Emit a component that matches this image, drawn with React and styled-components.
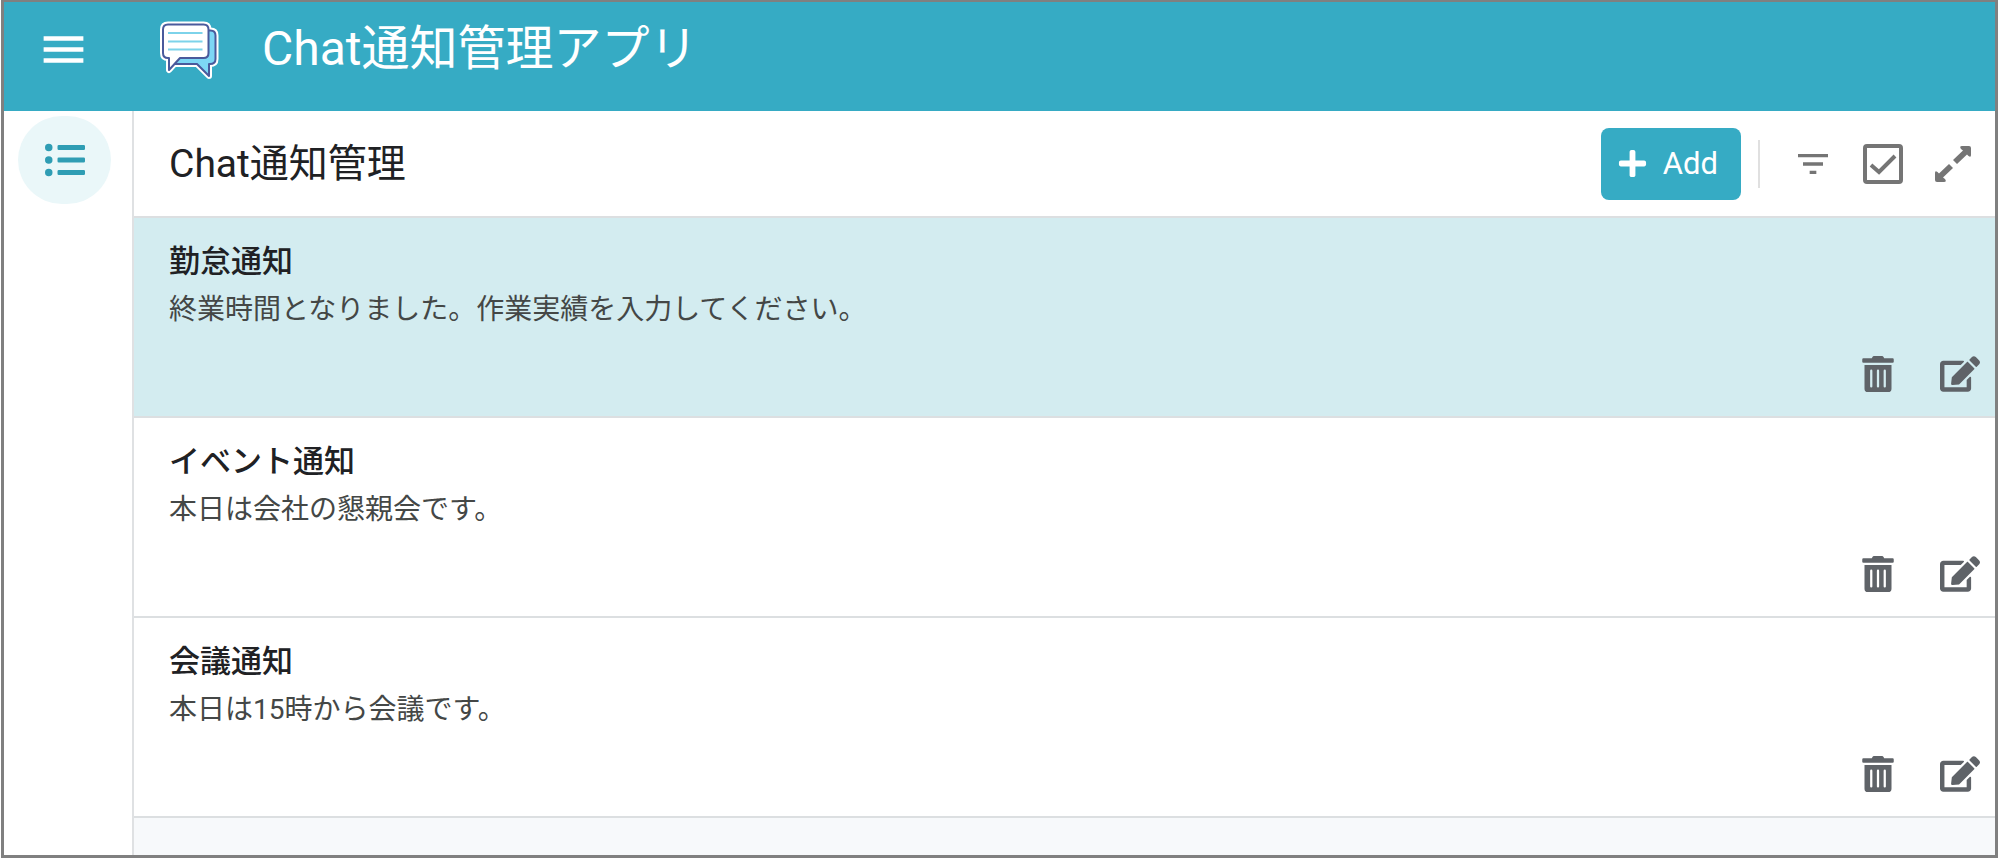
import React, { useState } from 'react'
import styled, { createGlobalStyle } from 'styled-components';
import { FaEdit, FaListUl, FaPlus, FaTrashAlt } from 'react-icons/fa';
import { MdFilterList, MdMenu } from 'react-icons/md';

const notices = [
  { id: 1, title: '勤怠通知', message: '終業時間となりました。作業実績を入力してください。' },
  { id: 2, title: 'イベント通知', message: '本日は会社の懇親会です。' },
  { id: 3, title: '会議通知', message: '本日は15時から会議です。' },
];

const bubblePath = 'M13 9.5 H48.5 Q53.5 9.5 53.5 14.5 V38 Q53.5 43 48.5 43 H25 L14 55 V43 H13 Q8 43 8 38 V14.5 Q8 9.5 13 9.5 Z';
const backBubblePath = 'M20 15.5 H55.5 Q60.5 15.5 60.5 20.5 V44 Q60.5 49 55 49 H54 V61 L42 49 H19 Z';

function ChatLogo() {
  return (
    <svg width="60" height="60" viewBox="4 5 60 60" aria-hidden="true">
      <g stroke="#fff" strokeWidth="6" fill="#fff" strokeLinejoin="round">
        <path d={backBubblePath} />
        <path d={bubblePath} />
      </g>
      <g stroke="#4a5a9c" strokeWidth="2" strokeLinejoin="round">
        <path d={backBubblePath} fill="#7dd7f5" />
        <path d={bubblePath} fill="#fff" />
      </g>
      <path d="M13 18 H47.5 M13 26.5 H47.5 M13 34.5 H47.5" stroke="#7dd3ea" strokeWidth="2" />
    </svg>
  )
}

function SelectIcon() {
  return (
    <svg width="40" height="40" viewBox="0 0 40 40" fill="none" stroke="#757575" aria-hidden="true">
      <rect x="2" y="2" width="36" height="36" rx="2" strokeWidth="4" />
      <path d="M8 21 L16 28 L32 12" strokeWidth="4" />
    </svg>
  )
}

function ExpandIcon() {
  return (
    <svg width="36" height="36" viewBox="0 0 36 36" fill="#757575" aria-hidden="true">
      <path d="M36 2 V9 Q36 12 33.5 10 L32 8.5 L22 18 L18 14 L28 4.5 L26 3 Q24 0 27 0 H34 Q36 0 36 2 Z" />
      <path d="M0 34 V27 Q0 24 2.5 26 L4 27.5 L14 18 L18 22 L8 31.5 L10 33 Q12 36 9 36 H2 Q0 36 0 34 Z" />
    </svg>
  )
}

function App() {
  const [selectedId, setSelectedId] = useState(1);

  return (
    <Frame>
      <GlobalStyle />
      <Header>
        <IconButton $size={54} $color="#fff" aria-label="メニュー"><MdMenu size={53} /></IconButton>
        <ChatLogo />
        <AppTitle>Chat通知管理アプリ</AppTitle>
      </Header>
      <Body>
        <SideNav>
          <NavLink href="#list" aria-label="Chat通知管理"><FaListUl size={40} /></NavLink>
        </SideNav>
        <Main>
          <Toolbar>
            <ViewTitle>Chat通知管理</ViewTitle>
            <AddButton><FaPlus size={31} />Add</AddButton>
            <Divider />
            <ToolGroup>
              <IconButton $size={40} $color="#757575" aria-label="フィルター"><MdFilterList size={40} /></IconButton>
              <IconButton $size={40} $color="#757575" aria-label="選択"><SelectIcon /></IconButton>
              <IconButton $size={40} $color="#757575" aria-label="拡大"><ExpandIcon /></IconButton>
            </ToolGroup>
          </Toolbar>
          <NoticeList>
            {notices.map((notice) => (
              <NoticeItem
                key={notice.id}
                $selected={notice.id === selectedId}
                onClick={() => setSelectedId(notice.id)}
              >
                <NoticeTitle>{notice.title}</NoticeTitle>
                <NoticeText>{notice.message}</NoticeText>
                <NoticeActions>
                  <IconButton $size={40} $color="#5f6368" aria-label="削除"><FaTrashAlt size={36} /></IconButton>
                  <IconButton $size={40} $color="#5f6368" aria-label="編集"><FaEdit size={40} /></IconButton>
                </NoticeActions>
              </NoticeItem>
            ))}
          </NoticeList>
        </Main>
      </Body>
    </Frame>
  )
}

export default App

const GlobalStyle = createGlobalStyle`
  * {
    box-sizing: border-box;
  }
  body {
    margin: 0;
    background-color: white;
    font-family: Roboto, "Noto Sans CJK JP", sans-serif;
  }
`;

const Frame = styled.div`
  display: flex;
  flex-direction: column;
  min-height: 100vh;
  margin: 0 1px;
  border: 3px solid #808080;
  border-top-width: 2px;
`;

const Header = styled.header`
  display: flex;
  align-items: center;
  height: 109px;
  padding: 0 32px 14px;
  background-color: #36abc4;
  color: white;

  svg {
    flex-shrink: 0;
  }

  > svg {
    margin-left: 69px;
  }
`;

const AppTitle = styled.h1`
  margin: 0 0 2px 43px;
  font-size: 48px;
  font-weight: 400;
  line-height: 64px;
`;

const Body = styled.div`
  display: flex;
  flex: 1;
`;

const SideNav = styled.nav`
  flex-shrink: 0;
  width: 130px;
  padding: 5px 14px;
  border-right: 2px solid #dfe1e3;
`;

const NavLink = styled.a`
  display: flex;
  justify-content: center;
  align-items: center;
  width: 93px;
  height: 88px;
  border-radius: 44px;
  background-color: #eaf7f9;
  color: #2f9db4;
`;

const Main = styled.main`
  flex: 1;
  min-width: 0;
  background-color: #f7f9fb;
`;

const Toolbar = styled.div`
  display: flex;
  align-items: center;
  height: 107px;
  padding: 0 22px 0 35px;
  border-bottom: 2px solid #dcdfe1;
  background-color: white;
`;

const ViewTitle = styled.h2`
  flex: 1;
  margin: 0;
  color: #202124;
  font-size: 39px;
  font-weight: 400;
  line-height: 56px;
`;

const AddButton = styled.button`
  display: flex;
  align-items: center;
  gap: 15px;
  height: 72px;
  padding: 0 23px 0 16px;
  border: none;
  border-radius: 8px;
  background-color: #36abc4;
  color: white;
  font-family: inherit;
  font-size: 31px;
`;

const Divider = styled.div`
  width: 2px;
  height: 48px;
  margin: 0 33px 0 17px;
  background-color: #e0e0e0;
`;

const ToolGroup = styled.div`
  display: flex;
  align-items: center;
  gap: 30px;
`;

const IconButton = styled.button`
  display: flex;
  justify-content: center;
  align-items: center;
  flex-shrink: 0;
  width: ${({ $size }) => $size}px;
  height: ${({ $size }) => $size}px;
  padding: 0;
  border: none;
  background: none;
  color: ${({ $color }) => $color};
  cursor: pointer;
`;

const NoticeList = styled.ul`
  margin: 0;
  padding: 0;
  list-style: none;
`;

const NoticeItem = styled.li`
  display: flex;
  flex-direction: column;
  min-height: 200px;
  padding: 20px 15px 22px 35px;
  border-bottom: 2px solid #dcdfe1;
  background-color: ${({ $selected }) => ($selected ? '#d3ecf0' : 'white')};
`;

const NoticeTitle = styled.h3`
  margin: 0;
  color: #202124;
  font-size: 31px;
  font-weight: 500;
  line-height: 48px;
`;

const NoticeText = styled.p`
  margin: 0;
  color: #444746;
  font-size: 28px;
  line-height: 48px;
`;

const NoticeActions = styled.div`
  display: flex;
  justify-content: flex-end;
  gap: 42px;
  margin-top: auto;
`;
